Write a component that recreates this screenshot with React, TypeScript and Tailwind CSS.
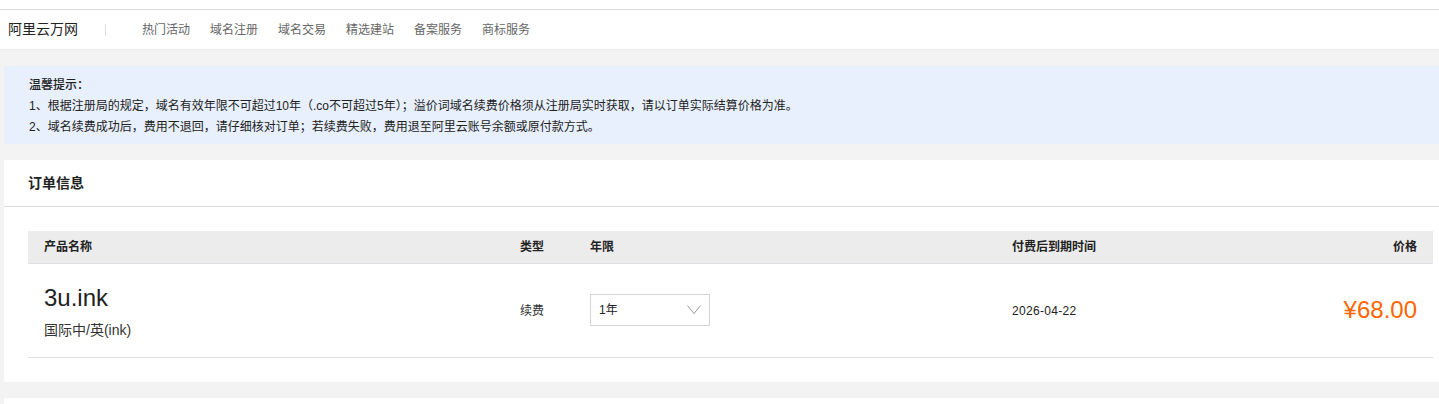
import React from "react";

const line0 = "\u6E29\u99A8\u63D0\u793A\uFF1A";
const line1 =
  "1\u3001\u6839\u636E\u6CE8\u518C\u5C40\u7684\u89C4\u5B9A\uFF0C\u57DF\u540D\u6709\u6548\u5E74\u9650\u4E0D\u53EF\u8D85\u8FC710\u5E74\uFF08.co\u4E0D\u53EF\u8D85\u8FC75\u5E74\uFF09\uFF1B\u6EA2\u4EF7\u8BCD\u57DF\u540D\u7EED\u8D39\u4EF7\u683C\u987B\u4ECE\u6CE8\u518C\u5C40\u5B9E\u65F6\u83B7\u53D6\uFF0C\u8BF7\u4EE5\u8BA2\u5355\u5B9E\u9645\u7ED3\u7B97\u4EF7\u683C\u4E3A\u51C6\u3002";
const line2 =
  "2\u3001\u57DF\u540D\u7EED\u8D39\u6210\u529F\u540E\uFF0C\u8D39\u7528\u4E0D\u9000\u56DE\uFF0C\u8BF7\u4ED4\u7EC6\u6838\u5BF9\u8BA2\u5355\uFF1B\u82E5\u7EED\u8D39\u5931\u8D25\uFF0C\u8D39\u7528\u9000\u81F3\u963F\u91CC\u4E91\u8D26\u53F7\u4F59\u989D\u6216\u539F\u4ED8\u6B3E\u65B9\u5F0F\u3002";

export default function App() {
  return (
    <div className="h-[404px] w-[1439px] overflow-hidden bg-[#f3f3f3] text-[12px] text-[#333] font-['Liberation_Sans','Noto_Sans_CJK_SC',sans-serif]">
      <div className="h-[10px] border-b border-[#dcdcdc] bg-white" />
      <header className="flex h-[40px] items-center border-b border-[#ececec] bg-white">
        <div className="ml-[8px] w-[97px] text-[14px] text-[#222]">阿里云万网</div>
        <div className="h-[12px] w-px bg-[#ddd]" />
        <nav className="ml-[36px] flex gap-[20px] text-[12px] text-[#666]">
          {["热门活动", "域名注册", "域名交易", "精选建站", "备案服务", "商标服务"].map((t) => (
            <span key={t} className="w-[48px]">{t}</span>
          ))}
        </nav>
      </header>

      <section className="ml-[4px] mt-[16px] flex h-[78px] flex-col justify-center rounded-l-[2px] bg-[#e8f0fd] pl-[25px] pt-[2px] text-[12px] leading-[21px] text-[#222]">
        <p className="font-medium">{line0}</p>
        <p>{line1}</p>
        <p>{line2}</p>
      </section>

      <section className="ml-[4px] mt-[16px] h-[222px] bg-white">
        <div className="flex h-[47px] items-center border-b border-[#ddd] pl-[24px] text-[14px] font-bold text-[#222]">订单信息</div>
        <div className="ml-[24px] mr-[6px] mt-[24px]">
          <div className="flex h-[33px] items-center border-b border-[#dfdfe6] bg-[#ececec] text-[12px] font-bold text-[#222]">
            <div className="w-[492px] pl-[16px]">产品名称</div>
            <div className="w-[70px]">类型</div>
            <div className="w-[422px]">年限</div>
            <div className="flex-1">付费后到期时间</div>
            <div className="pr-[16px]">价格</div>
          </div>
          <div className="flex h-[94px] items-center border-b border-[#dfdfe6] text-[#222]">
            <div className="w-[492px] pl-[16px] pt-[2px]">
              <div className="text-[24px] leading-[28px]">3u.ink</div>
              <div className="mt-[9px] text-[14px] leading-[18px] text-[#333]">国际中/英(ink)</div>
            </div>
            <div className="w-[70px] text-[12px] text-[#333]">续费</div>
            <div className="w-[422px] pb-[2px]">
              <div className="flex h-[32px] w-[120px] items-center justify-between border border-[#d5d5d5] px-[8px] text-[12px]">
                <span>1年</span>
                <svg width="14" height="9" viewBox="0 0 14 9" fill="none" stroke="#999" strokeWidth="1">
                  <path d="M0.5 0.5l6.5 8 6.5-8" />
                </svg>
              </div>
            </div>
            <div className="flex-1 text-[12px] tracking-[0.3px]">2026-04-22</div>
            <div className="pr-[16px] pb-[2px] text-[24px] leading-[28px] text-[#ff6600]">¥68.00</div>
          </div>
        </div>
      </section>

      <section className="ml-[4px] mt-[16px] h-[40px] bg-white" />
    </div>
  );
}
